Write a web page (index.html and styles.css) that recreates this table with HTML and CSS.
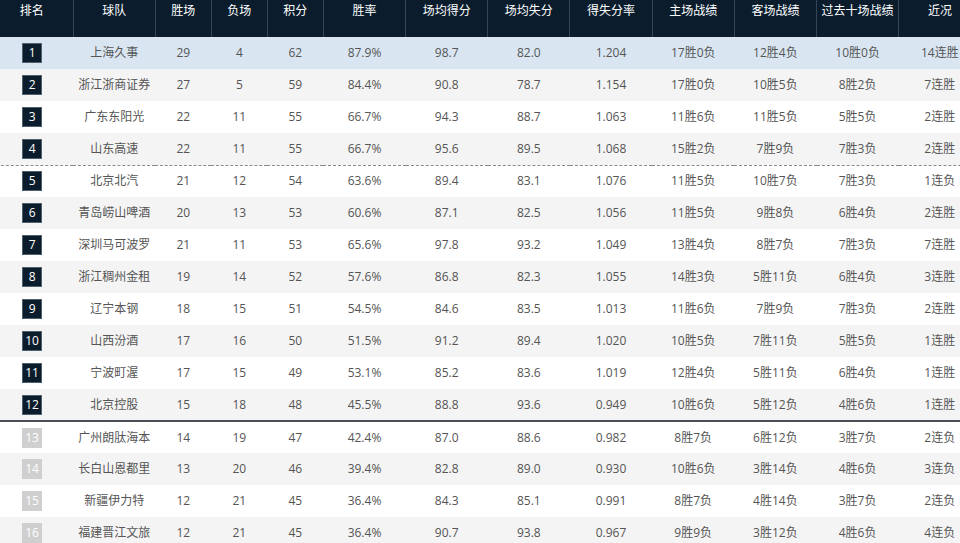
FILE: index.html
```html
<!DOCTYPE html>
<html lang="zh-CN">
<head>
<meta charset="utf-8">
<title>积分榜</title>
<link rel="stylesheet" href="styles.css">
</head>
<body>
<div class="wrap">
<table class="standings">
<colgroup>
<col class="w-wide"><col class="w-wide"><col class="w-narrow"><col class="w-narrow"><col class="w-narrow">
<col class="w-wide"><col class="w-wide"><col class="w-wide"><col class="w-wide"><col class="w-wide"><col class="w-wide"><col class="w-wide"><col class="w-wide">
</colgroup>
<thead>
<tr><th>排名</th><th>球队</th><th>胜场</th><th>负场</th><th>积分</th><th>胜率</th><th>场均得分</th><th>场均失分</th><th>得失分率</th><th>主场战绩</th><th>客场战绩</th><th>过去十场战绩</th><th>近况</th></tr>
</thead>
<tbody>
<tr class="hl"><td><span class="badge">1</span></td><td>上海久事</td><td>29</td><td>4</td><td>62</td><td>87.9%</td><td>98.7</td><td>82.0</td><td>1.204</td><td>17胜0负</td><td>12胜4负</td><td>10胜0负</td><td>14连胜</td></tr>
<tr class="alt"><td><span class="badge">2</span></td><td>浙江浙商证券</td><td>27</td><td>5</td><td>59</td><td>84.4%</td><td>90.8</td><td>78.7</td><td>1.154</td><td>17胜0负</td><td>10胜5负</td><td>8胜2负</td><td>7连胜</td></tr>
<tr><td><span class="badge">3</span></td><td>广东东阳光</td><td>22</td><td>11</td><td>55</td><td>66.7%</td><td>94.3</td><td>88.7</td><td>1.063</td><td>11胜6负</td><td>11胜5负</td><td>5胜5负</td><td>2连胜</td></tr>
<tr class="alt dotted"><td><span class="badge">4</span></td><td>山东高速</td><td>22</td><td>11</td><td>55</td><td>66.7%</td><td>95.6</td><td>89.5</td><td>1.068</td><td>15胜2负</td><td>7胜9负</td><td>7胜3负</td><td>2连胜</td></tr>
<tr><td><span class="badge">5</span></td><td>北京北汽</td><td>21</td><td>12</td><td>54</td><td>63.6%</td><td>89.4</td><td>83.1</td><td>1.076</td><td>11胜5负</td><td>10胜7负</td><td>7胜3负</td><td>1连负</td></tr>
<tr class="alt"><td><span class="badge">6</span></td><td>青岛崂山啤酒</td><td>20</td><td>13</td><td>53</td><td>60.6%</td><td>87.1</td><td>82.5</td><td>1.056</td><td>11胜5负</td><td>9胜8负</td><td>6胜4负</td><td>2连胜</td></tr>
<tr><td><span class="badge">7</span></td><td>深圳马可波罗</td><td>21</td><td>11</td><td>53</td><td>65.6%</td><td>97.8</td><td>93.2</td><td>1.049</td><td>13胜4负</td><td>8胜7负</td><td>7胜3负</td><td>7连胜</td></tr>
<tr class="alt"><td><span class="badge">8</span></td><td>浙江稠州金租</td><td>19</td><td>14</td><td>52</td><td>57.6%</td><td>86.8</td><td>82.3</td><td>1.055</td><td>14胜3负</td><td>5胜11负</td><td>6胜4负</td><td>3连胜</td></tr>
<tr><td><span class="badge">9</span></td><td>辽宁本钢</td><td>18</td><td>15</td><td>51</td><td>54.5%</td><td>84.6</td><td>83.5</td><td>1.013</td><td>11胜6负</td><td>7胜9负</td><td>7胜3负</td><td>2连胜</td></tr>
<tr class="alt"><td><span class="badge">10</span></td><td>山西汾酒</td><td>17</td><td>16</td><td>50</td><td>51.5%</td><td>91.2</td><td>89.4</td><td>1.020</td><td>10胜5负</td><td>7胜11负</td><td>5胜5负</td><td>1连胜</td></tr>
<tr><td><span class="badge">11</span></td><td>宁波町渥</td><td>17</td><td>15</td><td>49</td><td>53.1%</td><td>85.2</td><td>83.6</td><td>1.019</td><td>12胜4负</td><td>5胜11负</td><td>6胜4负</td><td>1连胜</td></tr>
<tr class="alt cut"><td><span class="badge">12</span></td><td>北京控股</td><td>15</td><td>18</td><td>48</td><td>45.5%</td><td>88.8</td><td>93.6</td><td>0.949</td><td>10胜6负</td><td>5胜12负</td><td>4胜6负</td><td>1连胜</td></tr>
<tr><td><span class="badge out">13</span></td><td>广州朗肽海本</td><td>14</td><td>19</td><td>47</td><td>42.4%</td><td>87.0</td><td>88.6</td><td>0.982</td><td>8胜7负</td><td>6胜12负</td><td>3胜7负</td><td>2连负</td></tr>
<tr class="alt"><td><span class="badge out">14</span></td><td>长白山恩都里</td><td>13</td><td>20</td><td>46</td><td>39.4%</td><td>82.8</td><td>89.0</td><td>0.930</td><td>10胜6负</td><td>3胜14负</td><td>4胜6负</td><td>3连负</td></tr>
<tr><td><span class="badge out">15</span></td><td>新疆伊力特</td><td>12</td><td>21</td><td>45</td><td>36.4%</td><td>84.3</td><td>85.1</td><td>0.991</td><td>8胜7负</td><td>4胜14负</td><td>3胜7负</td><td>2连负</td></tr>
<tr class="alt"><td><span class="badge out">16</span></td><td>福建晋江文旅</td><td>12</td><td>21</td><td>45</td><td>36.4%</td><td>90.7</td><td>93.8</td><td>0.967</td><td>9胜9负</td><td>3胜12负</td><td>4胜6负</td><td>4连负</td></tr>
</tbody>
</table>
</div>
</body>
</html>
```
FILE: styles.css
```css
html, body {
  margin: 0;
  padding: 0;
  background: #ffffff;
  overflow: hidden;
}
.wrap {
  width: 960px;
  height: 543px;
  overflow: hidden;
}
.standings {
  margin-left: -9px;
  width: 989px;
  table-layout: fixed;
  border-collapse: collapse;
  font-family: "Open Sans", "Noto Sans CJK SC", sans-serif;
  font-size: 12px;
  color: #555555;
}
.w-wide { width: 82.2px; }
.w-narrow { width: 56px; }
.standings th {
  height: 37px;
  padding: 2px 0 0;
  box-sizing: border-box;
  vertical-align: top;
  background: #0b1d2d;
  color: #ffffff;
  font-weight: normal;
  line-height: 16px;
  border-left: 1px solid #34475a;
  font-family: "Noto Sans CJK SC", sans-serif;
}
.standings th:first-child { border-left: none; }
.standings td {
  height: 32px;
  padding: 0;
  box-sizing: border-box;
  text-align: center;
  vertical-align: middle;
  line-height: 16px;
  white-space: nowrap;
}
.standings tbody tr { background: #ffffff; }
.standings tbody tr.alt { background: #f4f4f4; }
.standings tbody tr.hl { background: #d9e6f2; }
.standings tbody tr.dotted td { border-bottom: 1px dashed #8a8a8a; }
.standings tbody tr.cut td { border-bottom: 2px solid #4a4f55; }
.badge {
  display: inline-block;
  width: 20px;
  height: 20px;
  line-height: 20px;
  background: #0b1d2d;
  color: #ffffff;
  font-size: 12px;
  text-align: center;
  box-shadow: 0 0 0 1px #51606d inset;
}
.badge.out {
  background: #cfcfcf;
  box-shadow: none;
}
```
